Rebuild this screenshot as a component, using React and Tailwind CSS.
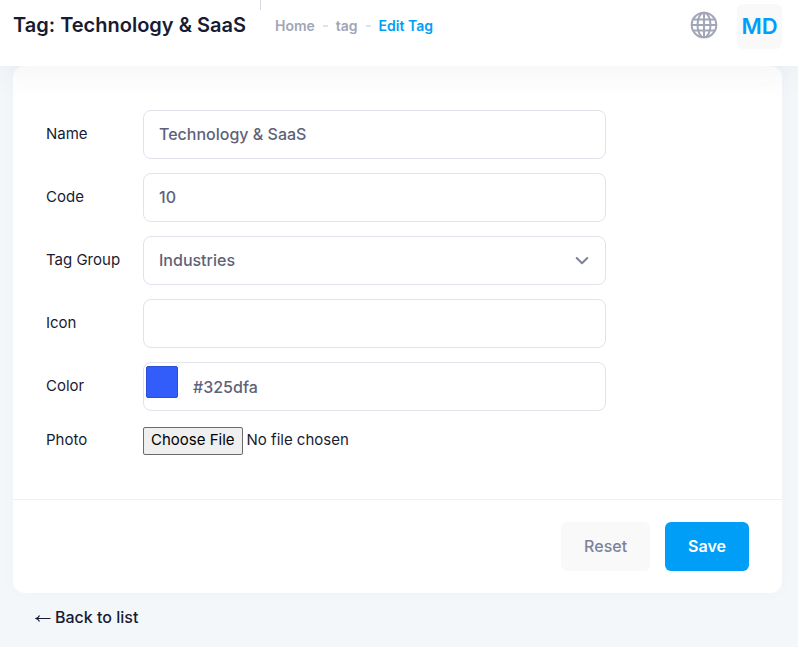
const inputClass =
  'block h-[49px] w-full rounded-lg border border-[#e1e3ea] bg-white px-[15px] pb-0.5 text-base font-medium text-[#5e6278] outline-none focus:border-[#b5b5c3]'

function Globe() {
  return (
    <svg className="size-7" viewBox="0 0 28 28" fill="none" stroke="#a1a5b7" strokeWidth="2">
      <circle cx="14" cy="14" r="12.3" />
      <ellipse cx="14" cy="14" rx="6.5" ry="12.3" />
      <path d="M14 2v24M2 14h24M4 8.5h20M4 19.5h20" />
    </svg>
  )
}

function Row({ id, label, children }) {
  return (
    <div className="grid grid-cols-[97px_1fr] items-center">
      <label htmlFor={id} className="pb-0.5 text-[15px] leading-6 text-[#181c32]">{label}</label>
      {children}
    </div>
  )
}

function Header() {
  return (
    <header className="relative z-10 flex h-[66px] items-start justify-between bg-white pr-4 pl-[13px] shadow-[0_10px_30px_0_rgba(82,63,105,0.05)]">
      <div className="flex items-start">
        <h1 className="pt-2.5 text-xl leading-[30px] font-semibold text-[#181c32]">Tag: Technology &amp; SaaS</h1>
        <span className="mx-3.5 h-2.5 w-px bg-[#d8dae5]" />
        <nav className="flex items-center gap-2 pt-4 text-sm leading-5 font-semibold text-[#a1a5b7]">
          <a href="#home">Home</a>
          <span className="h-0.5 w-[5px] bg-[#e1e3ea]" />
          <a href="#tag">tag</a>
          <span className="h-0.5 w-[5px] bg-[#e1e3ea]" />
          <span className="text-[#009ef7]">Edit Tag</span>
        </nav>
      </div>
      <div className="flex items-start gap-[19px] pt-1">
        <button type="button" aria-label="Language" className="pt-[7px]">
          <Globe />
        </button>
        <button type="button" className="size-[45px] rounded-md bg-[#f9f9f9] text-[22px] font-semibold text-[#009ef7]">MD</button>
      </div>
    </header>
  )
}

export default function App() {
  return (
    <div className="min-h-screen bg-[#f3f7fa] font-['Inter',sans-serif]">
      <Header />
      <main className="pr-4 pb-4 pl-[13px]">
        <form className="rounded-xl bg-white shadow-[0_0_20px_0_rgba(76,87,125,0.02)]">
          <div className="flex w-full max-w-[593px] flex-col gap-3.5 pt-11 pb-[42px] pl-[33px]">
            <Row id="name" label="Name">
              <input id="name" type="text" defaultValue="Technology & SaaS" className={inputClass} />
            </Row>
            <Row id="code" label="Code">
              <input id="code" type="text" defaultValue="10" className={inputClass} />
            </Row>
            <Row id="group" label="Tag Group">
              <div className="relative">
                <select id="group" className={`${inputClass} appearance-none`}>
                  <option>Industries</option>
                </select>
                <svg className="pointer-events-none absolute top-4 right-4 size-4" viewBox="0 0 16 16" fill="none" stroke="#7e8299" strokeWidth="2" strokeLinecap="round" strokeLinejoin="round">
                  <path d="M2.7 6 8 11.2 13.3 6" />
                </svg>
              </div>
            </Row>
            <Row id="icon" label="Icon">
              <input id="icon" type="text" className={inputClass} />
            </Row>
            <Row id="color" label="Color">
              <div className="flex h-[49px] items-start rounded-lg border border-[#e1e3ea]">
                <span className="mt-[3px] ml-0.5 size-8 rounded-xs border border-[#2a4fd6] bg-[#325dfa]" />
                <input id="color" type="text" defaultValue="#325dfa" className="h-full min-w-0 flex-1 px-[15px] text-base font-medium text-[#5e6278] outline-none" />
              </div>
            </Row>
            <Row id="photo" label="Photo">
              <input
                id="photo"
                type="file"
                className="my-0.5 text-[15px] leading-6 text-[#181c32] file:mr-1 file:h-7 file:rounded-xs file:border file:border-solid file:border-[#6b6b6b] file:bg-[#efefef] file:px-[7px] file:pb-0.5 file:text-black"
              />
            </Row>
          </div>
          <div className="flex justify-end gap-[15px] border-t border-[#eff2f5] px-[33px] py-[22px] text-base">
            <button type="reset" className="h-[49px] rounded-md bg-[#f9f9f9] px-[23px] pb-0.5 font-medium text-[#7e8299]">Reset</button>
            <button type="submit" className="h-[49px] rounded-md bg-[#009ef7] px-[23px] pb-0.5 font-semibold text-white">Save</button>
          </div>
        </form>
        <a href="#list" className="mt-3 ml-[22px] inline-flex items-center gap-1 text-base font-medium text-[#181c32]">
          <svg className="mt-1 size-4" viewBox="0 0 16 16" fill="none" stroke="currentColor" strokeWidth="1.2">
            <path d="M15.5 7.5H1.5M4.5 4.5Q3.5 6.8 1 7.5Q3.5 8.2 4.5 10.5" />
          </svg>
          Back to list
        </a>
      </main>
    </div>
  )
}
